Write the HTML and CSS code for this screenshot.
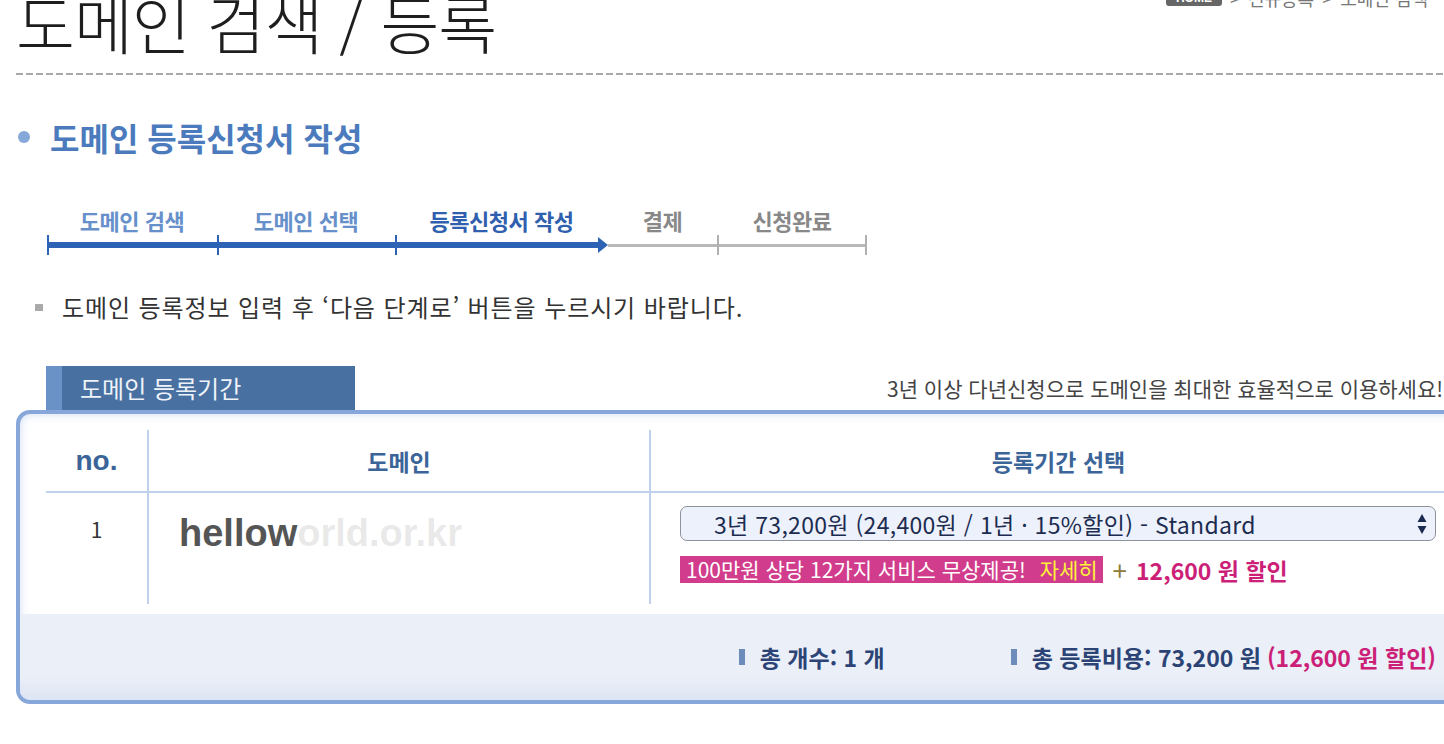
FILE: index.html
```html
<!DOCTYPE html>
<html lang="ko">
<head>
<meta charset="utf-8">
<title>도메인 검색 / 등록</title>
<link rel="stylesheet" href="styles.css">
</head>
<body>
<div class="page">
  <header class="page-head">
    <h1 class="page-title">도메인 검색 / 등록</h1>
    <nav class="crumb"><span class="home">HOME</span><span class="sep">&gt;</span>신규등록<span class="sep">&gt;</span>도메인 검색</nav>
  </header>

  <h2 class="section-title">도메인 등록신청서 작성</h2>

  <ol class="steps">
    <li class="step done"><span class="label">도메인 검색</span><span class="track"></span></li>
    <li class="step done"><span class="label">도메인 선택</span><span class="track"></span></li>
    <li class="step current"><span class="label">등록신청서 작성</span><span class="track"></span></li>
    <li class="step todo no-tick"><span class="label">결제</span><span class="track"></span></li>
    <li class="step todo last"><span class="label">신청완료</span><span class="track"></span></li>
  </ol>

  <p class="notice">도메인 등록정보 입력 후 ‘다음 단계로’ 버튼을 누르시기 바랍니다.</p>

  <div class="period-head">
    <div class="tab">도메인 등록기간</div>
    <p class="tip">3년 이상 다년신청으로 도메인을 최대한 효율적으로 이용하세요! <a href="#">자세히 보기</a></p>
  </div>

  <div class="box">
    <table class="grid">
      <colgroup><col class="w-no"><col class="w-domain"><col class="w-period"></colgroup>
      <thead>
        <tr><th class="c-no">no.</th><th>도메인</th><th>등록기간 선택</th></tr>
      </thead>
      <tbody>
        <tr>
          <td class="c-no">1</td>
          <td class="c-domain"><span class="domain">hellow<span class="masked">orld.or.kr</span></span></td>
          <td class="c-period">
            <div class="select-wrap">
              <select class="period-select">
                <option>3년 73,200원 (24,400원 / 1년 · 15%할인) - Standard</option>
              </select>
              <svg class="select-arrows" width="10" height="22" viewBox="0 0 10 22" aria-hidden="true">
                <path d="M5 1 L9.5 9 L0.5 9 Z" fill="#1c2c50"/>
                <path d="M5 21 L9.5 13 L0.5 13 Z" fill="#1c2c50"/>
              </svg>
            </div>
            <div class="promo">
              <span class="promo-badge">100만원 상당 12가지 서비스 무상제공! <em>자세히</em></span>
              <span class="plus">+</span>
              <strong>12,600 원 할인</strong>
            </div>
          </td>
        </tr>
      </tbody>
    </table>
    <div class="summary">
      <span class="sum-item">총 개수: 1 개</span>
      <span class="sum-item">총 등록비용: 73,200 원 <em>(12,600 원 할인)</em></span>
    </div>
  </div>
</div>
</body>
</html>
```
FILE: styles.css
```css
html, body {
  margin: 0;
  padding: 0;
  background: #fff;
  overflow: hidden;
}
body {
  font-family: "Noto Sans CJK KR", "Noto Sans", sans-serif;
  color: #333;
}
.page {
  width: 1500px;
  box-sizing: border-box;
  padding-left: 16px;
}

/* header */
.page-head {
  display: flex;
  align-items: flex-start;
  margin-top: -10px;
  padding-bottom: 23px;
  background: repeating-linear-gradient(to right, #a9a9a9 0 7px, transparent 7px 10px) left bottom / 100% 2px no-repeat;
}
.page-title {
  margin: 0;
  font-size: 64px;
  line-height: 62px;
  font-weight: 300;
  letter-spacing: -1px;
  color: #1e1e1e;
}
.crumb {
  margin-left: auto;
  margin-right: 72px;
  display: flex;
  align-items: center;
  font-size: 18px;
  line-height: 16px;
  color: #777;
  white-space: nowrap;
}
.home {
  display: inline-block;
  background: #666;
  color: #fff;
  font-family: "Liberation Sans", sans-serif;
  font-weight: 700;
  font-size: 12px;
  line-height: 16px;
  padding: 0 10px;
  border-radius: 3px;
}
.sep {
  margin: 0 8px;
}

/* section title */
.section-title {
  display: flex;
  align-items: center;
  gap: 20px;
  margin: 44px 0 0 2px;
  font-size: 32px;
  line-height: 36px;
  font-weight: 700;
  color: #4b7bbd;
}
.section-title::before {
  content: "";
  width: 12px;
  height: 12px;
  border-radius: 50%;
  background: #86a7d9;
}

/* steps */
.steps {
  list-style: none;
  margin: 53px 0 0 31px;
  padding: 0;
  display: grid;
  grid-template-columns: 170px 178px 213px 109px 150px;
}
.step {
  display: flex;
  flex-direction: column;
  align-items: center;
}
.label {
  font-size: 22px;
  line-height: 24px;
  font-weight: 700;
  color: #6790cb;
  letter-spacing: -0.5px;
}
.current .label { color: #2f5fae; }
.todo .label { color: #888; }
.track {
  align-self: stretch;
  display: flex;
  align-items: center;
  height: 20px;
  margin-top: 3px;
  border-left: 2px solid #2e62b4;
}
.track::before {
  content: "";
  flex: 1;
  height: 6px;
  background: #2e62b4;
}
.current .track::after {
  content: "";
  border-left: 10px solid #2e62b4;
  border-top: 8px solid transparent;
  border-bottom: 8px solid transparent;
}
.todo .track { border-left-color: #b0b0b0; }
.todo .track::before { height: 3px; background: #b8b8b8; }
.no-tick .track { border-left: 0; }
.last .track { border-right: 2px solid #b0b0b0; }

/* notice */
.notice {
  margin: 38px 0 0 19px;
  display: flex;
  align-items: center;
  gap: 19px;
  font-size: 24px;
  line-height: 28px;
  letter-spacing: 0.9px;
  color: #333;
}
.notice::before {
  content: "";
  width: 8px;
  height: 7px;
  background: #aaa;
}

/* period header */
.period-head {
  display: flex;
  align-items: center;
  margin: 45px 0 0 30px;
}
.tab {
  flex: none;
  width: 309px;
  height: 44px;
  box-sizing: border-box;
  background: #4870a0;
  border-left: 16px solid #6a92c6;
  padding-left: 18px;
  color: #eef3fa;
  font-size: 24px;
  line-height: 44px;
}
.tip {
  margin: 0 0 0 532px;
  font-size: 21px;
  color: #444;
  white-space: nowrap;
}
.tip a { color: #444; }

/* box */
.box {
  border: 4px solid #87a7db;
  border-radius: 14px;
  box-shadow: inset 0 0 10px rgba(120, 155, 215, 0.35);
  overflow: hidden;
}
.grid {
  margin: 16px 0 0 26px;
  border-spacing: 0;
  table-layout: fixed;
  width: 1420px;
}
.w-no { width: 101px; }
.w-domain { width: 502px; }
.w-period { width: 817px; }
.grid th {
  height: 61px;
  padding: 0;
  border-bottom: 2px solid #bfd1ec;
  font-size: 23px;
  font-weight: 700;
  color: #3b6499;
}
.grid th.c-no {
  font-family: "Liberation Sans", sans-serif;
  font-size: 28px;
}
.grid th + th,
.grid td + td {
  border-left: 2px solid #bfd1ec;
}
.grid td {
  height: 111px;
  padding: 0;
  vertical-align: top;
  box-sizing: border-box;
}
.grid td.c-no {
  text-align: center;
  padding-top: 24px;
  font-size: 21px;
  line-height: 24px;
  color: #333;
}
.grid td.c-domain {
  padding: 20px 0 0 30px;
}
.domain {
  font-family: "Liberation Sans", sans-serif;
  font-weight: 700;
  font-size: 38px;
  line-height: 40px;
  color: #555;
}
.masked { color: rgba(85, 85, 85, 0.14); }
.grid td.c-period {
  padding: 13px 0 0 29px;
}
.select-wrap {
  position: relative;
  width: 756px;
  height: 35px;
}
.period-select {
  -webkit-appearance: none;
  appearance: none;
  width: 100%;
  height: 35px;
  box-sizing: border-box;
  border: 1px solid #8e939b;
  border-radius: 7px;
  background: #edf1fb;
  font-family: inherit;
  font-size: 23px;
  letter-spacing: 0.3px;
  color: #1c2c50;
  padding: 0 0 0 33px;
}
.select-arrows {
  position: absolute;
  right: 9px;
  top: 7px;
}
.promo {
  margin-top: 15px;
  display: flex;
  align-items: center;
  height: 27px;
  font-size: 21px;
  white-space: nowrap;
}
.promo-badge {
  background: #d13c8c;
  color: #fff;
  padding: 0 5px 0 6px;
  line-height: 27px;
}
.promo-badge em {
  font-style: normal;
  color: #fff23a;
  margin-left: 8px;
}
.plus {
  color: #8c7a3c;
  font-size: 26px;
  margin: 0 9px 0 10px;
}
.promo strong {
  color: #cc1f78;
  font-size: 23px;
  font-weight: 700;
}

/* summary */
.summary {
  margin-top: 10px;
  height: 86px;
  display: flex;
  justify-content: flex-end;
  align-items: center;
  gap: 126px;
  padding-right: 60px;
  background: linear-gradient(#ebeff8 0, #ebeff8 72%, #dde5f3 100%);
  font-size: 23px;
  font-weight: 700;
  color: #2c4475;
}
.sum-item {
  display: flex;
  align-items: center;
  white-space: nowrap;
}
.sum-item::before {
  content: "";
  width: 6px;
  height: 16px;
  background: #6d8bbb;
  margin-right: 15px;
}
.sum-item em {
  font-style: normal;
  color: #cc1f78;
  margin-left: 6px;
}
```
